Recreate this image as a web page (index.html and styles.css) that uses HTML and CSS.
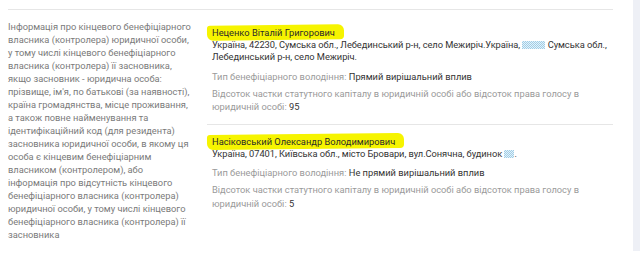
FILE: index.html
```html
<!DOCTYPE html>
<html lang="uk">
<head>
<meta charset="utf-8">
<link rel="stylesheet" href="styles.css">
</head>
<body>
<div class="page">
  <main class="main">
    <div class="row">
      <div class="label-col">Інформація про кінцевого бенефіціарного власника (контролера) юридичної особи, у тому числі кінцевого бенефіціарного власника (контролера) її засновника, якщо засновник - юридична особа: прізвище, ім'я, по батькові (за наявності), країна громадянства, місце проживання, а також повне найменування та ідентифікаційний код (для резидента) засновника юридичної особи, в якому ця особа є кінцевим бенефіціарним власником (контролером), або інформація про відсутність кінцевого бенефіціарного власника (контролера) юридичної особи, у тому числі кінцевого бенефіціарного власника (контролера) її засновника</div>
      <div class="value-col">
        <div class="entry first">
          <div class="name"><span class="mark">Неценко Віталій Григорович</span></div>
          <div class="addr">Україна, 42230, Сумська обл., Лебединський р-н, село Межиріч.Україна, <span class="hidden"></span> Сумська обл., Лебединський р-н, село Межиріч.</div>
          <div class="field"><span class="key">Тип бенефіціарного володіння:</span> Прямий вирішальний вплив</div>
          <div class="field share"><span class="key">Відсоток частки статутного капіталу в юридичній особі або відсоток права голосу в юридичній особі:</span> 95</div>
        </div>
        <div class="entry">
          <div class="name"><span class="mark">Насіковський Олександр Володимирович</span></div>
          <div class="addr">Україна, 07401, Київська обл., місто Бровари, вул.Сонячна, будинок <span class="hidden short"></span>.</div>
          <div class="field"><span class="key">Тип бенефіціарного володіння:</span> Не прямий вирішальний вплив</div>
          <div class="field share"><span class="key">Відсоток частки статутного капіталу в юридичній особі або відсоток права голосу в юридичній особі:</span> 5</div>
        </div>
      </div>
    </div>
  </main>
  <aside class="side"></aside>
</div>
</body>
</html>
```
FILE: styles.css
```css
html, body {
  margin: 0;
  padding: 0;
  background: #ffffff;
}
body {
  font-family: Roboto, "Noto Sans", "DejaVu Sans", sans-serif;
  font-size: 9.3px;
  color: #3a3a3a;
}
.page {
  display: flex;
  gap: 20px;
  height: 263px;
  overflow: hidden;
}
.main {
  width: 605px;
  margin-left: 8px;
  margin-top: 9px;
  border-top: 1px solid #e6e6e6;
}
.side {
  flex: 1;
  height: 251px;
  background: #eef0f6;
}
.row {
  display: flex;
}
.label-col {
  width: 186px;
  padding-top: 9.5px;
  line-height: 13px;
  color: #7a7a7a;
}
.value-col {
  flex: 1;
  margin-left: 13px;
}
.entry {
  padding: 9.5px 0 10.5px 5px;
  border-bottom: 1px solid #e6e6e6;
}
.entry.first {
  padding-top: 15.5px;
}
.entry:last-child {
  border-bottom: none;
}
.name {
  line-height: 13px;
  color: #2b2b2b;
}
.mark {
  position: relative;
  z-index: 0;
}
.mark::before {
  content: "";
  position: absolute;
  z-index: -1;
  left: -5px;
  right: -9px;
  top: -2px;
  bottom: -2px;
  background: #f6f400;
  border-radius: 3px 6px 4px 6px;
  transform: rotate(-0.6deg);
}
.addr {
  line-height: 12.5px;
  color: #333333;
  letter-spacing: -0.05px;
}
.field {
  margin-top: 6px;
  line-height: 13px;
  color: #333333;
}
.field.share {
  margin-top: 4px;
  line-height: 13.5px;
}
.key {
  color: #9a9a9a;
}
.hidden {
  display: inline-block;
  width: 23px;
  height: 8px;
  vertical-align: -1px;
  background: repeating-conic-gradient(#9fcde6 0 25%, #e4f2fa 0 50%) 0 0 / 2px 2px;
}
.hidden.short {
  width: 10px;
}
```
